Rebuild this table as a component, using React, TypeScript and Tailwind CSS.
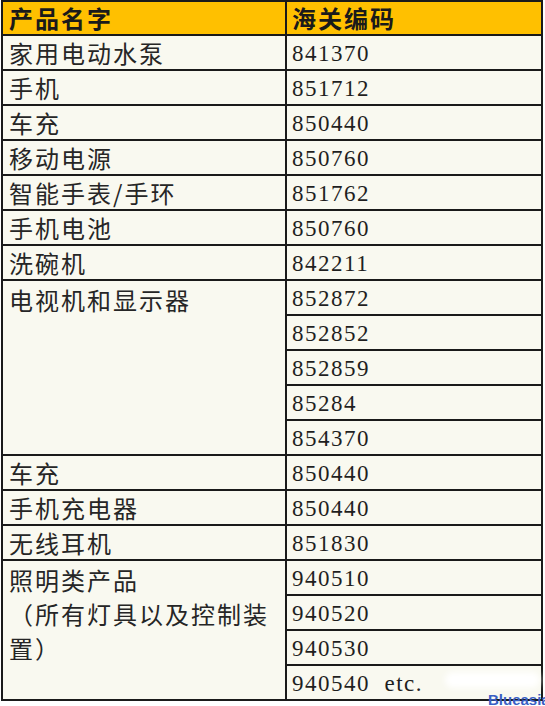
const cjk = "font-['Noto_Sans_CJK_SC',sans-serif]";
const num = "font-['Liberation_Serif','Noto_Sans_CJK_SC',serif]";

type Row = { name: string[]; codes: string[] };

const rows: Row[] = [
  { name: ["家用电动水泵"], codes: ["841370"] },
  { name: ["手机"], codes: ["851712"] },
  { name: ["车充"], codes: ["850440"] },
  { name: ["移动电源"], codes: ["850760"] },
  { name: ["智能手表/手环"], codes: ["851762"] },
  { name: ["手机电池"], codes: ["850760"] },
  { name: ["洗碗机"], codes: ["842211"] },
  { name: ["电视机和显示器"], codes: ["852872", "852852", "852859", "85284", "854370"] },
  { name: ["车充"], codes: ["850440"] },
  { name: ["手机充电器"], codes: ["850440"] },
  { name: ["无线耳机"], codes: ["851830"] },
  { name: ["照明类产品", "（所有灯具以及控制装", "置）"], codes: ["940510", "940520", "940530", "940540 etc."] },
];

const cell = "border-2 border-[#1a1a1a] p-0 h-[34px] leading-[30px]";

export default function App() {
  return (
    <div className="relative h-[706px] w-[545px] overflow-hidden bg-white pl-px">
      <table className="w-[542px] table-fixed border-collapse bg-[#f9f9f0] text-[#262626]">
        <colgroup>
          <col className="w-[284px]" />
          <col />
        </colgroup>
        <tbody>
          <tr className="bg-[#ffc000]">
            <td className={`${cell} pl-[6px] text-[24px] font-bold tracking-[2px] text-[#1a1a1a] ${cjk}`}>产品名字</td>
            <td className={`${cell} pl-[5px] text-[24px] font-bold tracking-[2px] text-[#1a1a1a] ${cjk}`}>海关编码</td>
          </tr>
          {rows.flatMap((r, i) =>
            r.codes.map((code, j) => (
              <tr key={`${i}-${j}`}>
                {j === 0 && (
                  <td
                    rowSpan={r.codes.length}
                    className={`${cell} pl-[6px] pt-[1px] text-[24px] tracking-[2px] ${cjk} ${
                      r.codes.length > 1 ? "align-top pt-[2px] !leading-[34px]" : ""
                    }`}
                  >
                    {r.name.map((line, k) => (
                      <div key={k} className="whitespace-nowrap">
                        {line}
                      </div>
                    ))}
                  </td>
                )}
                <td className={`${cell} pl-[5px] pt-[3px] text-[23px] tracking-[1.5px] whitespace-pre text-[#1f1f1f] ${num}`}>
                  {code === "940540 etc." ? "940540  etc." : code}
                </td>
              </tr>
            ))
          )}
        </tbody>
      </table>
      <div className="absolute left-[445px] top-[672px] h-[16px] w-[95px] rounded-full bg-white blur-[3px]" />
      <div className="absolute left-[488px] top-[692px] text-[15px] font-bold leading-none text-[#3a5fc4] font-['Liberation_Sans',sans-serif]">
        Blueasia
      </div>
    </div>
  );
}
